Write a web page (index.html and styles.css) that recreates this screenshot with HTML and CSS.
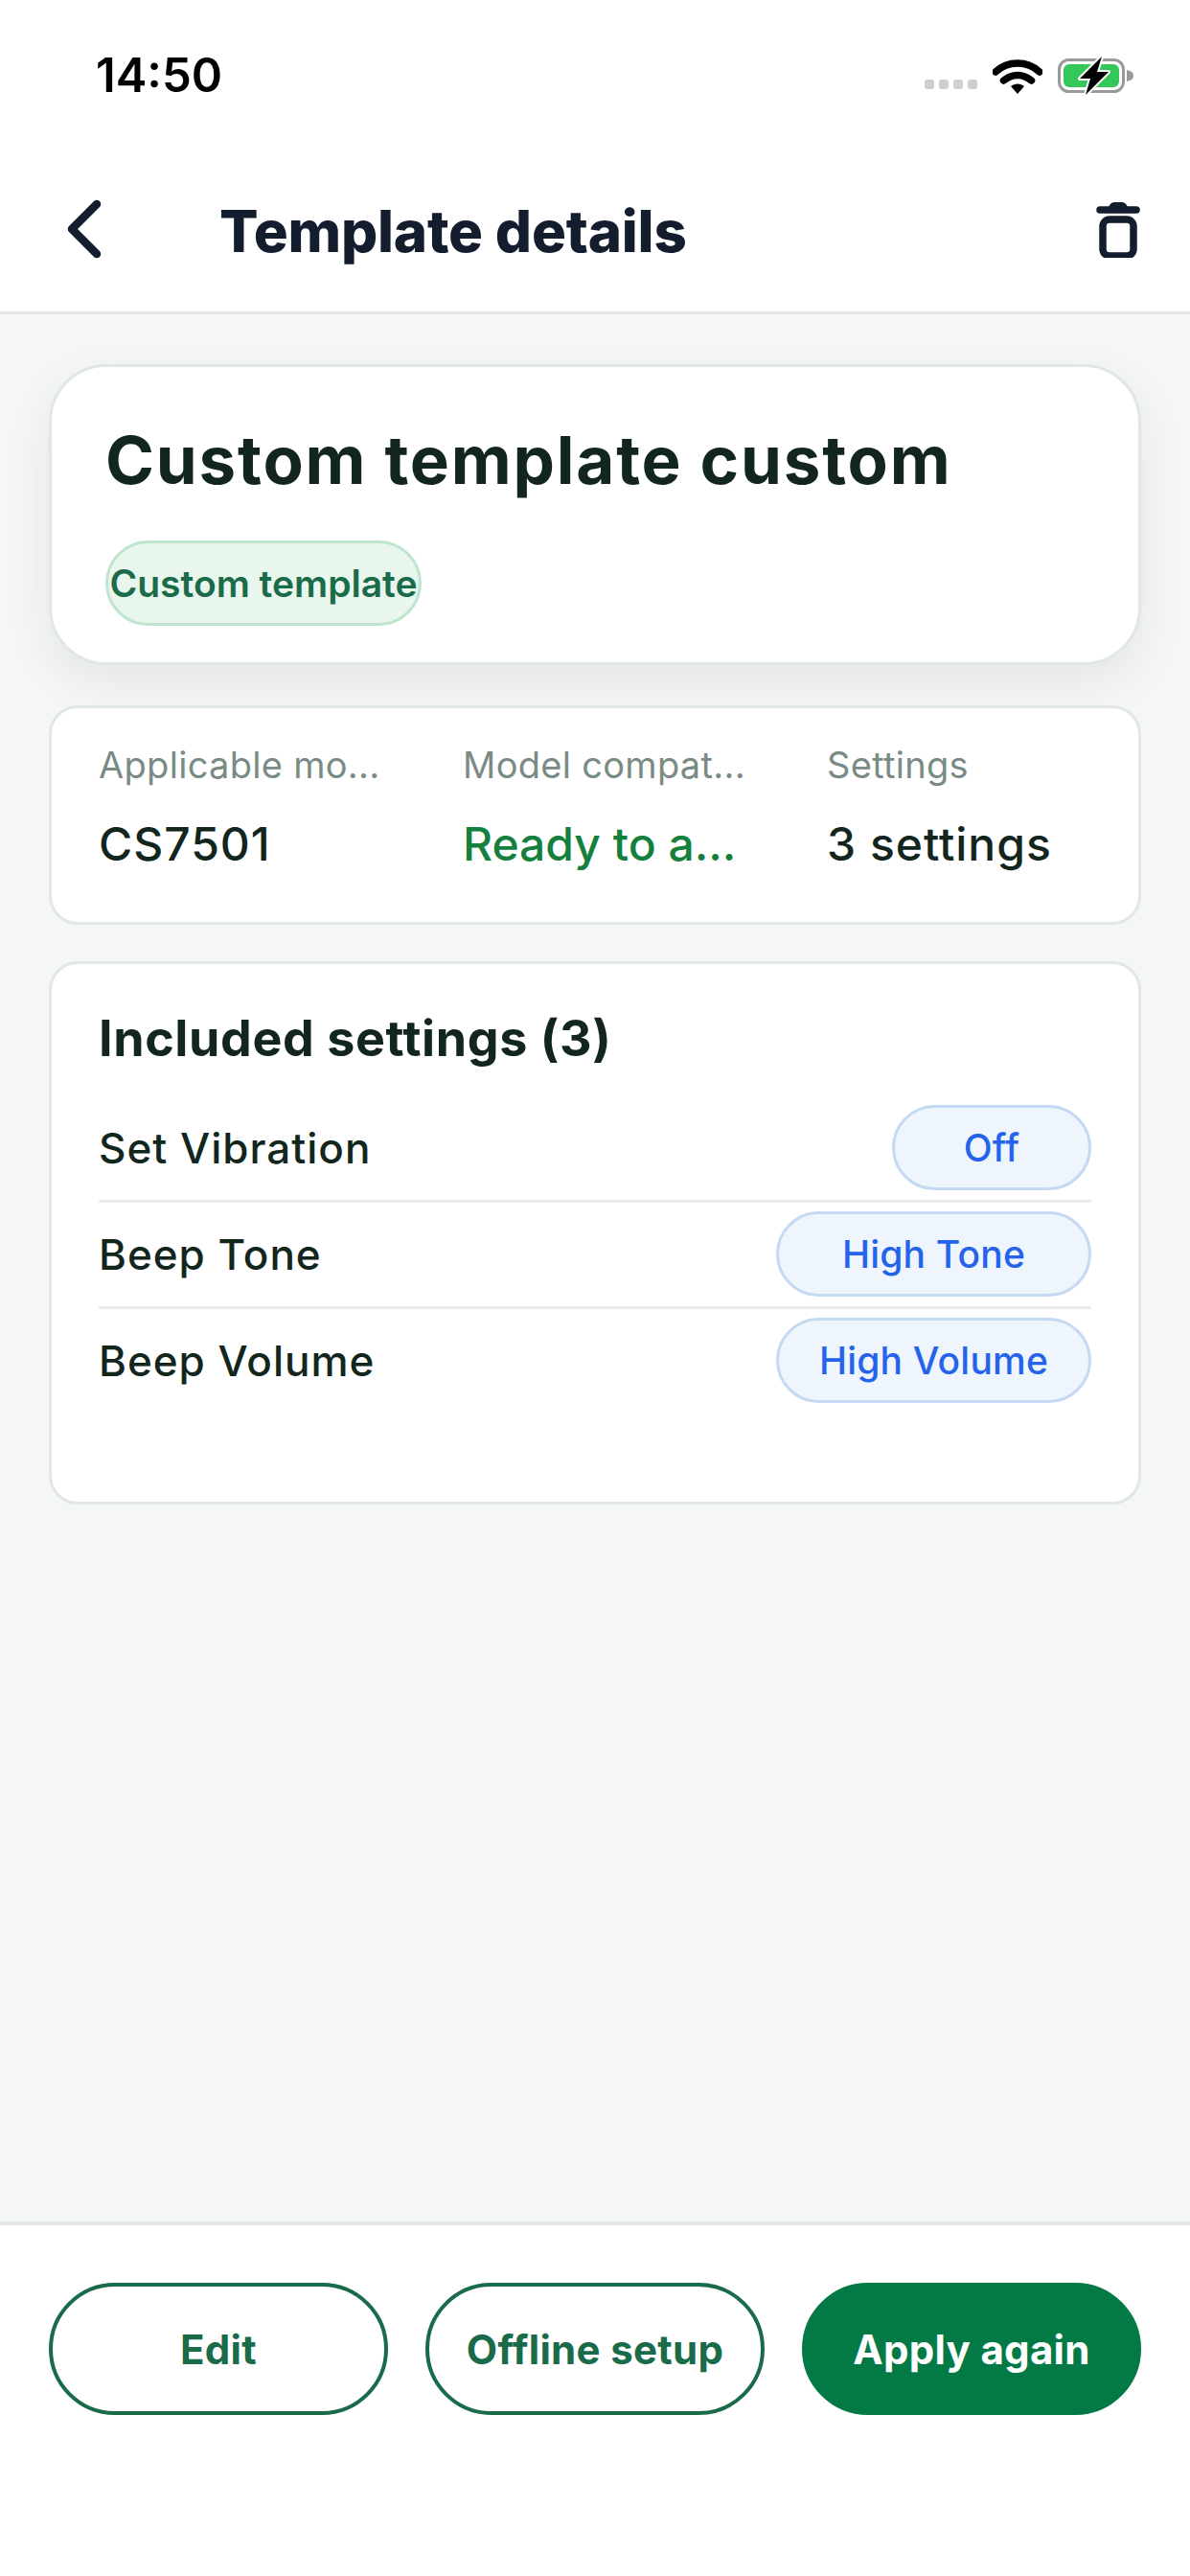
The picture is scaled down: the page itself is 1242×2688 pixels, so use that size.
FILE: index.html
```html
<!DOCTYPE html>
<html>
	<head>
		<meta charset="utf-8" />
		<title>Template details</title>
		<link rel="stylesheet" href="styles.css">
	</head>
	<body>
		<div class="page">
			<header class="top">
				<div class="status">
					<span class="time">14:50</span>
					<div class="status-icons">
						<div class="signal"><i></i><i></i><i></i><i></i></div>
						<svg class="wifi" width="52" height="38" viewBox="0 0 52 38">
							<path d="M3 15 C16 3 36 3 49 15" fill="none" stroke="#000" stroke-width="7.5" stroke-linecap="round"/>
							<path d="M11.5 24 C20 16.500 32 16.500 40.500 24" fill="none" stroke="#000" stroke-width="7.5" stroke-linecap="round"/>
							<path d="M19 30 C23 26.500 29 26.500 33 30 L26 38 Z" fill="#000"/>
						</svg>
						<svg class="battery" width="80" height="40" viewBox="0 0 80 40">
							<rect x="1.500" y="3.500" width="67" height="33" rx="10" fill="none" stroke="#9a9a9a" stroke-width="3"/>
							<rect x="6" y="8" width="58" height="24" rx="6" fill="#34c759"/>
							<path d="M72 14 C77 15 79 17 79 20 C79 23 77 25 72 26 Z" fill="#9a9a9a"/>
							<path d="M46 0 L23 23 L34 23 L29 40 L53 16 L41 16 Z" fill="#000" stroke="#fff" stroke-width="4" stroke-linejoin="round" paint-order="stroke"/>
						</svg>
					</div>
				</div>
				<nav class="nav">
					<svg class="back" width="40" height="64" viewBox="0 0 40 64">
						<path d="M33 6 L7 32 L33 58" fill="none" stroke="#141d2e" stroke-width="8.500" stroke-linecap="round" stroke-linejoin="round"/>
					</svg>
					<h1 class="nav-title">Template details</h1>
					<svg class="trash" width="46" height="60" viewBox="0 0 46 60">
						<path d="M4 10 H42" fill="none" stroke="#141d2e" stroke-width="7.500" stroke-linecap="round"/>
						<path d="M13 8 C14 3 17 2 20 2 H26 C29 2 32 3 33 8 Z" fill="#141d2e"/>
						<rect x="7" y="20" width="32" height="38" rx="7" fill="none" stroke="#141d2e" stroke-width="7.500"/>
					</svg>
				</nav>
			</header>

			<main class="content">
				<section class="card hero">
					<h2 class="hero-title">Custom template custom</h2>
					<span class="tag">Custom template</span>
				</section>

				<section class="card info">
					<div class="info-col">
						<span class="info-label">Applicable mo...</span>
						<span class="info-value">CS7501</span>
					</div>
					<div class="info-col">
						<span class="info-label">Model compat...</span>
						<span class="info-value ready">Ready to a...</span>
					</div>
					<div class="info-col">
						<span class="info-label">Settings</span>
						<span class="info-value">3 settings</span>
					</div>
				</section>

				<section class="card settings">
					<h3 class="settings-title">Included settings (3)</h3>
					<div class="row">
						<span class="row-name">Set Vibration</span>
						<span class="pill pill-short">Off</span>
					</div>
					<div class="row">
						<span class="row-name">Beep Tone</span>
						<span class="pill">High Tone</span>
					</div>
					<div class="row">
						<span class="row-name">Beep Volume</span>
						<span class="pill">High Volume</span>
					</div>
				</section>
			</main>

			<footer class="actions">
				<button class="btn">Edit</button>
				<button class="btn">Offline setup</button>
				<button class="btn btn-main">Apply again</button>
			</footer>
		</div>
	</body>
</html>
```

FILE: styles.css
```css
* {
	padding: 0px;
	margin: 0px;
	box-sizing: border-box;
}

body {
	background-color: #fff;
	font-family: Inter, "Liberation Sans", sans-serif;
	color: #12261e;
}

.page {
	height: 2688px;
	display: flex;
	flex-direction: column;
}

/* top bar */
.top {
	background: #fff;
	border-bottom: 3px solid #e3e7e6;
}

.status {
	height: 157px;
	display: flex;
	align-items: center;
	justify-content: space-between;
	padding: 0 58px 0 100px;
}

.time {
	font-size: 49px;
	font-weight: 600;
	color: #000;
}

.status-icons {
	display: flex;
	align-items: center;
}

.signal {
	display: flex;
	gap: 5px;
	margin-top: 18px;
	margin-right: 16px;
}

.signal i {
	width: 10px;
	height: 10px;
	border-radius: 3px;
	background: #cfcfcf;
}

.wifi {
	margin-right: 16px;
}

.nav {
	height: 168px;
	display: flex;
	align-items: center;
	padding: 0 52px 0 68px;
}

.back,
.trash {
	margin-bottom: 4px;
}

.nav-title {
	flex: 1;
	margin-left: 121px;
	font-size: 60px;
	font-weight: 800;
	letter-spacing: -0.2px;
	color: #141d2e;
}

/* cards */
.content {
	flex: 1;
	background: #f5f7f5;
	padding: 52px 51px 0;
	display: flex;
	flex-direction: column;
	gap: 38px;
}

.card {
	background: #fff;
	border: 3px solid #e1e8e4;
	border-radius: 30px;
}

.hero {
	height: 314px;
	margin-bottom: 4px;
	border-radius: 60px;
	padding: 57px 56px 0;
	box-shadow: 0 18px 48px rgba(20, 40, 30, 0.08);
}

.hero-title {
	font-size: 69px;
	font-weight: 700;
	line-height: 80px;
	letter-spacing: 1.8px;
	color: #12261e;
}

.tag {
	display: inline-flex;
	align-items: center;
	justify-content: center;
	width: 330px;
	height: 89px;
	margin-top: 44px;
	border: 3px solid #bfe5cf;
	border-radius: 45px;
	background: #e9f6ee;
	color: #1a6b4a;
	font-size: 39px;
	font-weight: 600;
	white-space: nowrap;
}

.info {
	height: 229px;
	padding: 36px 49px 0;
	display: flex;
	gap: 84px;
}

.info-col {
	flex: none;
	width: 296px;
	display: flex;
	flex-direction: column;
	gap: 32px;
	white-space: nowrap;
}

.info-label {
	font-size: 38px;
	line-height: 46px;
	letter-spacing: 0.3px;
	color: #7a8a84;
}

.info-value {
	font-size: 48px;
	line-height: 56px;
	font-weight: 500;
	letter-spacing: 1px;
	color: #12261e;
}

.ready {
	letter-spacing: 0;
	color: #15803d;
}

.settings {
	height: 567px;
	padding: 48px 49px 0;
}

.settings-title {
	font-size: 52px;
	font-weight: 700;
	line-height: 60px;
	letter-spacing: 0.6px;
	margin-bottom: 30px;
	color: #12261e;
}

.row {
	display: flex;
	align-items: center;
	justify-content: space-between;
	padding: 9px 0 10px;
	border-bottom: 3px solid #e8ecea;
}

.row:last-child {
	border-bottom: none;
}

.row-name {
	font-size: 44px;
	font-weight: 500;
	letter-spacing: 1px;
}

.pill {
	display: flex;
	align-items: center;
	justify-content: center;
	width: 329px;
	height: 89px;
	border: 3px solid #c5d9f3;
	border-radius: 45px;
	background: #eef5fd;
	color: #2563eb;
	font-size: 39px;
	font-weight: 500;
	letter-spacing: 0.2px;
}

.pill-short {
	width: 208px;
}

/* bottom buttons */
.actions {
	height: 370px;
	background: #fff;
	border-top: 4px solid #e1e8e4;
	padding: 60px 51px 0;
	display: flex;
	align-items: flex-start;
	gap: 39px;
}

.btn {
	flex: 1;
	height: 138px;
	border: 4px solid #1a6b4a;
	border-radius: 69px;
	background: #fff;
	color: #1a6b4a;
	font-family: inherit;
	font-size: 42px;
	font-weight: 700;
	letter-spacing: 0.3px;
}

.btn-main {
	background: #037a45;
	border-color: #037a45;
	color: #fff;
}
```
